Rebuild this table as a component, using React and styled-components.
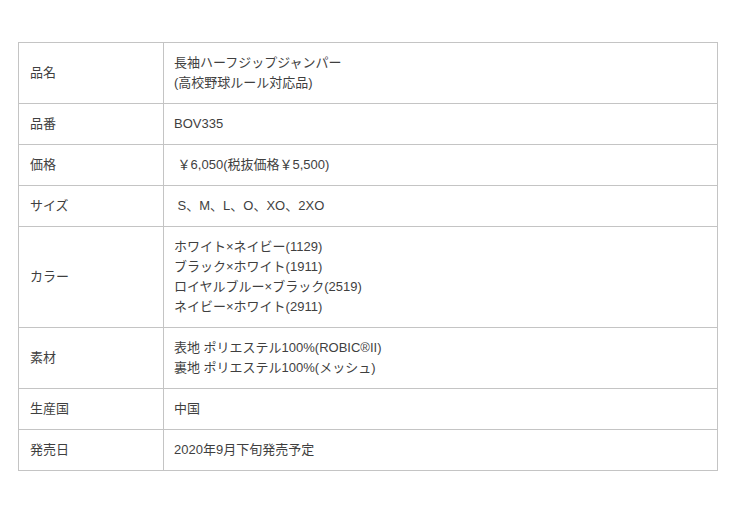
import React from 'react';
import styled, { createGlobalStyle } from 'styled-components';

const GlobalStyle = createGlobalStyle`
    html, body {
        margin: 0;
        padding: 0;
        background: #fff;
    }
    body {
        font-family: "Liberation Sans", "Noto Sans CJK JP", sans-serif;
        color: #3f3f3f;
    }
`;

const specs = [
    { label: '品名', lines: ['長袖ハーフジップジャンパー', '(高校野球ルール対応品)'] },
    { label: '品番', lines: ['BOV335'] },
    { label: '価格', lines: ['\u00a0￥6,050(税抜価格￥5,500)'] },
    { label: 'サイズ', lines: ['\u00a0S、M、L、O、XO、2XO'] },
    {
        label: 'カラー',
        lines: [
            'ホワイト×ネイビー(1129)',
            'ブラック×ホワイト(1911)',
            'ロイヤルブルー×ブラック(2519)',
            'ネイビー×ホワイト(2911)',
        ],
    },
    { label: '素材', lines: ['表地 ポリエステル100%(ROBIC®II)', '裏地 ポリエステル100%(メッシュ)'] },
    { label: '生産国', lines: ['中国'] },
    { label: '発売日', lines: ['2020年9月下旬発売予定'] },
];

const App = () => {
    return (
        <>
            <GlobalStyle />
            <Page>
                <SpecTable>
                    <tbody>
                        {specs.map((row, i) => (
                            <tr key={i}>
                                <Label>{row.label}</Label>
                                <Value>
                                    {row.lines.map((line, j) => (
                                        <Line key={j}>{line}</Line>
                                    ))}
                                </Value>
                            </tr>
                        ))}
                    </tbody>
                </SpecTable>
            </Page>
        </>
    );
};

const Page = styled.div`
    padding: 42px 23px 40px 18px;
`;

const SpecTable = styled.table`
    width: 700px;
    border-collapse: collapse;
    font-size: 13px;
    line-height: 20px;
`;

const Cell = styled.td`
    border: 1px solid #c4c4c4;
    padding: 10px 10px;
    vertical-align: middle;
    text-align: left;
`;

const Label = styled(Cell)`
    width: 123px;
    padding-left: 11px;
`;

const Value = styled(Cell)``;

const Line = styled.div`
    white-space: pre;
`;

export default App;
